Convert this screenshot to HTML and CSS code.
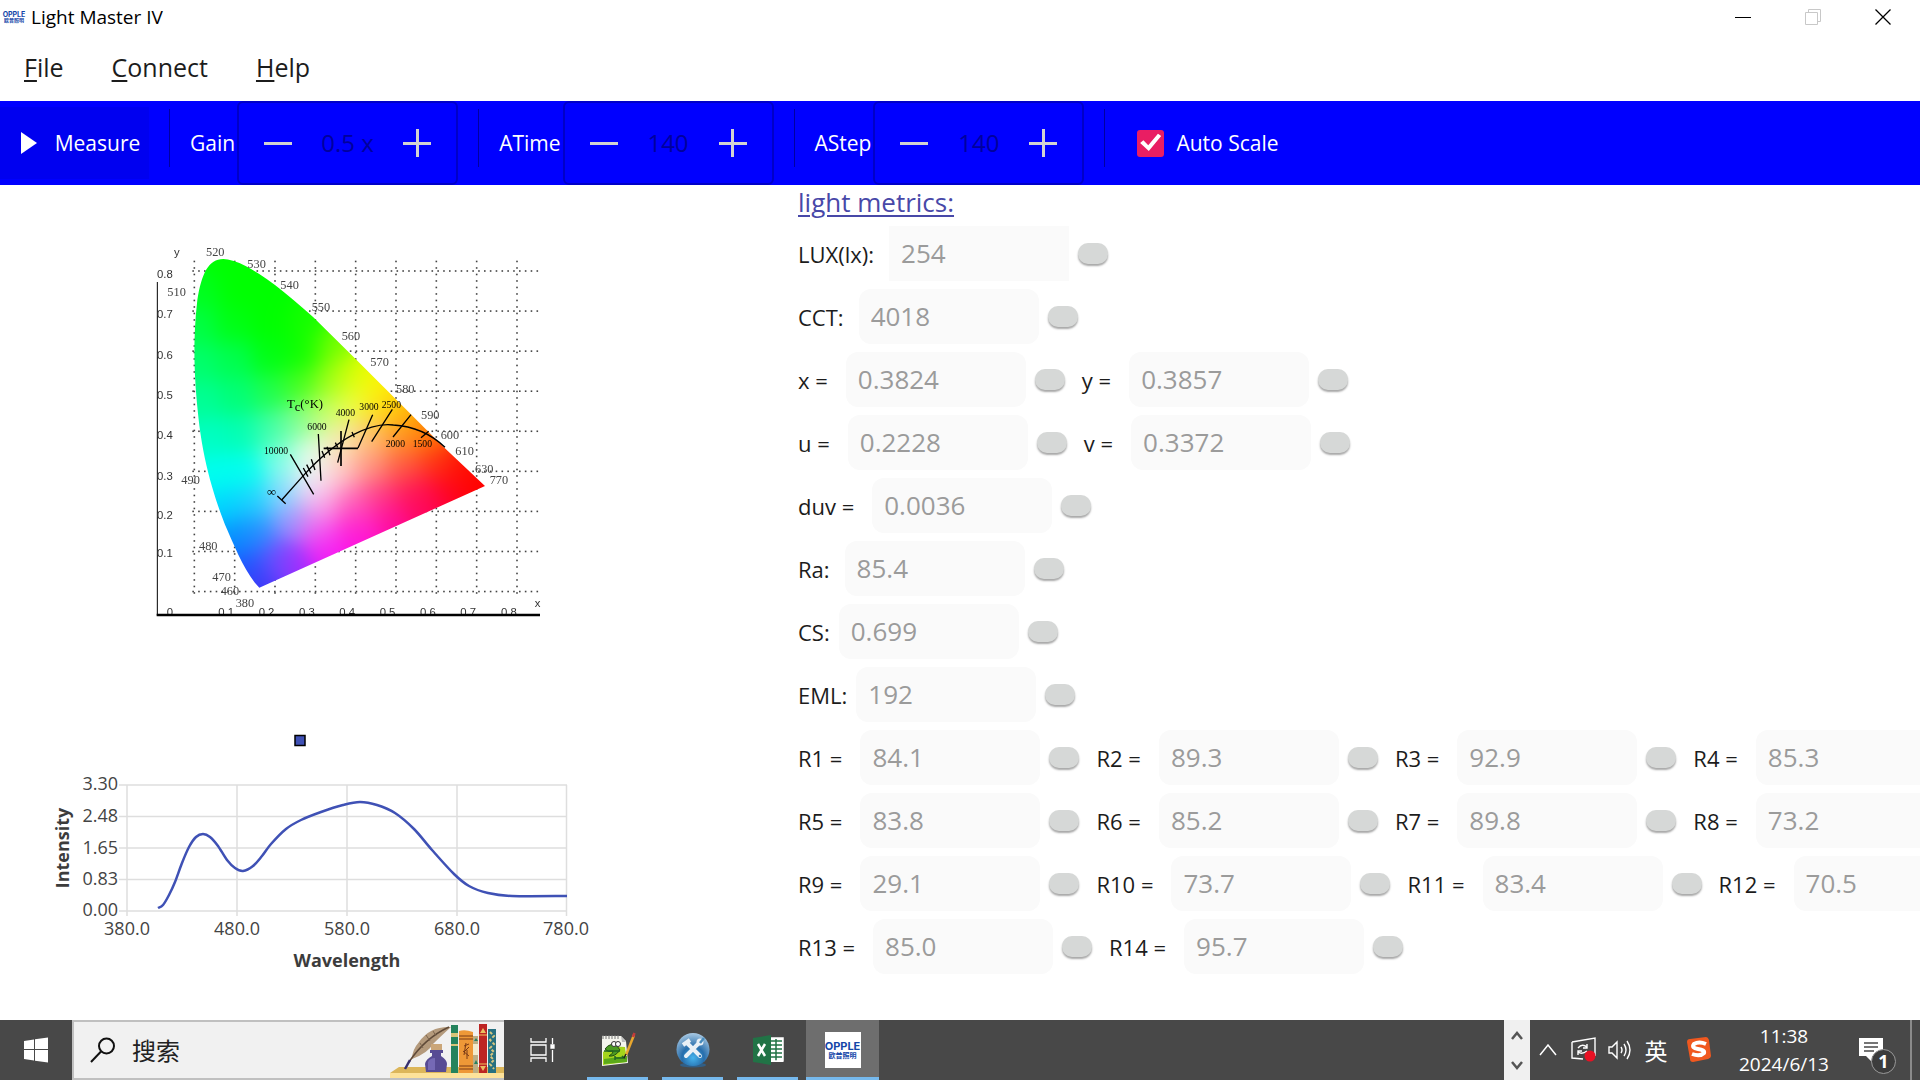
FILE: index.html
```html
<!DOCTYPE html>
<html lang="en">
<head>
  <meta charset="UTF-8">
  <meta name="viewport" content="width=device-width, initial-scale=1.0">
  <title>Light Master IV</title>
  <link rel="stylesheet" href="styles.css">
</head>
<body>

  <header class="titlebar">
    <span class="logo logo-small"><b>OPPLE</b><i>欧普照明</i></span>
    <span class="app-name">Light Master IV</span>
    <div class="window-buttons">
      <button aria-label="Minimize"><svg width="16" height="16"><path d="M0 8.5H16" stroke="#000"/></svg></button>
      <button aria-label="Restore" disabled><svg width="16" height="16" fill="none" stroke="#c8c8c8"><path d="M.5 3.500H12.500V15.500H.5zM3.500 3.500V.5H15.500V12.500H12.500"/></svg></button>
      <button aria-label="Close"><svg width="16" height="16"><path d="M.5 .5L15.500 15.500M15.500 .5L.5 15.500" stroke="#000" stroke-width="1.300"/></svg></button>
    </div>
  </header>

  <nav class="menu">
    <a href="#file"><u>F</u>ile</a>
    <a href="#connect"><u>C</u>onnect</a>
    <a href="#help"><u>H</u>elp</a>
  </nav>

  <div class="toolbar">
    <button class="measure"><svg width="16" height="22"><path d="M0 0L16 11L0 22z" fill="#fff"/></svg>Measure</button>
    <span class="sep"></span>
    <div class="setting">
      <label for="gain">Gain</label>
      <div class="spinner wide">
        <button class="minus" aria-label="Decrease gain"></button>
        <input id="gain" type="text" value="0.5 x">
        <button class="plus" aria-label="Increase gain"></button>
      </div>
    </div>
    <span class="sep"></span>
    <div class="setting">
      <label for="atime">ATime</label>
      <div class="spinner">
        <button class="minus" aria-label="Decrease ATime"></button>
        <input id="atime" type="text" value="140">
        <button class="plus" aria-label="Increase ATime"></button>
      </div>
    </div>
    <span class="sep"></span>
    <div class="setting">
      <label for="astep">AStep</label>
      <div class="spinner">
        <button class="minus" aria-label="Decrease AStep"></button>
        <input id="astep" type="text" value="140">
        <button class="plus" aria-label="Increase AStep"></button>
      </div>
    </div>
    <span class="sep"></span>
    <label class="auto-scale"><input type="checkbox" checked>Auto Scale</label>
  </div>

  <main>
    <section class="charts">
      <div class="cie">
        <canvas id="gamut" width="420" height="400"></canvas>
        <svg viewBox="0 0 1260 1200">
          <clipPath id="above-axis"><rect width="1260" height="1154"/></clipPath>
          <path d="M52 156V1156" stroke="#000" stroke-width="3"/>
          <g class="axis-text">
            <text x="51" y="144">0.8</text><text x="51" y="265">0.7</text><text x="51" y="388">0.6</text>
            <text x="51" y="508">0.5</text><text x="51" y="628">0.4</text><text x="51" y="749">0.3</text>
            <text x="51" y="868">0.2</text><text x="51" y="982">0.1</text>
            <text x="102" y="78">y</text><text x="1184" y="1131">x</text>
          </g>
          <g class="axis-text" clip-path="url(#above-axis)">
            <text x="80" y="1159">0</text><text x="235" y="1159">0.1</text><text x="356" y="1159">0.2</text>
            <text x="477" y="1159">0.3</text><text x="598" y="1159">0.4</text><text x="719" y="1159">0.5</text>
            <text x="840" y="1159">0.6</text><text x="961" y="1159">0.7</text><text x="1083" y="1159">0.8</text>
          </g>
          <path d="M50 1155H1200" stroke="#000" stroke-width="8"/>
          <g class="nm">
            <text x="198" y="78">520</text><text x="322" y="113">530</text><text x="421" y="176">540</text>
            <text x="515" y="244">550</text><text x="605" y="330">560</text><text x="691" y="408">570</text>
            <text x="768" y="490">580</text><text x="843" y="566">590</text><text x="902" y="627">600</text>
            <text x="946" y="675">610</text><text x="1005" y="728">630</text><text x="1049" y="763">770</text>
            <text x="82" y="197">510</text><text x="124" y="762">490</text><text x="177" y="960">480</text>
            <text x="217" y="1052">470</text><text x="242" y="1095">460</text><text x="287" y="1130">380</text>
          </g>
          <g class="kelvin">
            <text class="tc" x="441" y="534">T<tspan dy="8">c</tspan><tspan dy="-8">(°K)</tspan></text>
            <text x="372" y="673">10000</text><text x="502" y="600">6000</text><text x="587" y="558">4000</text>
            <text x="658" y="541">3000</text><text x="725" y="533">2500</text><text x="737" y="650">2000</text>
            <text x="818" y="650">1500</text><text class="tc" x="381" y="797">∞</text>
          </g>
          <g fill="none" stroke="#000" stroke-width="4">
            <path d="M425 810L490 737Q570 650 640 614T760 585Q850 590 915 652"/>
            <path d="M412 798L437 821M451 673L521 793M535 612L543 752M627 569L593 698M698 554L654 654M757 538L695 635M813 554L759 621M866 604L843 623"/>
            <path d="M490 714L504 740M500 704L513 730M514 688L525 720M546 663L554 683M561 650L570 676M586 638L593 652M636 606L643 622"/>
            <path d="M603 603V708M551 655H654" stroke-width="5"/>
          </g>
        </svg>
      </div>

      <svg class="spectrum" viewBox="0 0 580 270">
        <rect x="255" y="15.500" width="10" height="10" fill="#3f51b5" stroke="#000" stroke-width="1.500"/>
        <g stroke="#dedede" stroke-width="1.500">
          <path d="M79 65H527M79 96.500H527M79 128H527M79 159.500H527M79 191H527"/>
          <path d="M87 65V196M197 65V196M307 65V196M417 65V196M526.500 65V196"/>
        </g>
        <path id="spectrum-line" fill="none" stroke="#3f51b5" stroke-width="2.500"/>
        <g class="tick y">
          <text x="78" y="70">3.30</text><text x="78" y="102">2.48</text><text x="78" y="134">1.65</text>
          <text x="78" y="165">0.83</text><text x="78" y="196">0.00</text>
        </g>
        <g class="tick x">
          <text x="87" y="215">380.0</text><text x="197" y="215">480.0</text><text x="307" y="215">580.0</text>
          <text x="417" y="215">680.0</text><text x="526" y="215">780.0</text>
        </g>
        <text class="axis-title" x="307" y="247">Wavelength</text>
        <text class="axis-title" x="-128" y="29" transform="rotate(-90)">Intensity</text>
      </svg>
    </section>

    <section class="metrics">
      <h2><a href="#metrics">light metrics:</a></h2>
      <div class="row">
        <label for="lux">LUX(lx):</label><input class="square" id="lux" value="254" disabled><button aria-label="LUX"></button>
      </div>
      <div class="row">
        <label for="cct">CCT:</label><input id="cct" value="4018" disabled><button aria-label="CCT"></button>
      </div>
      <div class="row equal">
        <label for="x">x =</label><input id="x" value="0.3824" disabled><button aria-label="x"></button>
        <label for="y">y =</label><input id="y" value="0.3857" disabled><button aria-label="y"></button>
      </div>
      <div class="row equal">
        <label for="u">u =</label><input id="u" value="0.2228" disabled><button aria-label="u"></button>
        <label for="v">v =</label><input id="v" value="0.3372" disabled><button aria-label="v"></button>
      </div>
      <div class="row equal">
        <label for="duv">duv =</label><input id="duv" value="0.0036" disabled><button aria-label="duv"></button>
      </div>
      <div class="row">
        <label for="ra">Ra:</label><input id="ra" value="85.4" disabled><button aria-label="Ra"></button>
      </div>
      <div class="row tight">
        <label for="cs">CS:</label><input id="cs" value="0.699" disabled><button aria-label="CS"></button>
      </div>
      <div class="row tight">
        <label for="eml">EML:</label><input id="eml" value="192" disabled><button aria-label="EML"></button>
      </div>
      <div class="row equal">
        <label for="r1">R1 =</label><input id="r1" value="84.1" disabled><button aria-label="R1"></button>
        <label for="r2">R2 =</label><input id="r2" value="89.3" disabled><button aria-label="R2"></button>
        <label for="r3">R3 =</label><input id="r3" value="92.9" disabled><button aria-label="R3"></button>
        <label for="r4">R4 =</label><input id="r4" value="85.3" disabled><button aria-label="R4"></button>
      </div>
      <div class="row equal">
        <label for="r5">R5 =</label><input id="r5" value="83.8" disabled><button aria-label="R5"></button>
        <label for="r6">R6 =</label><input id="r6" value="85.2" disabled><button aria-label="R6"></button>
        <label for="r7">R7 =</label><input id="r7" value="89.8" disabled><button aria-label="R7"></button>
        <label for="r8">R8 =</label><input id="r8" value="73.2" disabled><button aria-label="R8"></button>
      </div>
      <div class="row equal">
        <label for="r9">R9 =</label><input id="r9" value="29.1" disabled><button aria-label="R9"></button>
        <label for="r10">R10 =</label><input id="r10" value="73.7" disabled><button aria-label="R10"></button>
        <label for="r11">R11 =</label><input id="r11" value="83.4" disabled><button aria-label="R11"></button>
        <label for="r12">R12 =</label><input id="r12" value="70.5" disabled><button aria-label="R12"></button>
      </div>
      <div class="row equal">
        <label for="r13">R13 =</label><input id="r13" value="85.0" disabled><button aria-label="R13"></button>
        <label for="r14">R14 =</label><input id="r14" value="95.7" disabled><button aria-label="R14"></button>
      </div>
    </section>
  </main>

  <footer class="taskbar">
    <button class="start" aria-label="Start">
      <svg width="24" height="26" fill="#fff"><path d="M0 4L10 2.500V12H0zM11 2.300L24 .5V12H11zM0 13H10V23.500L0 22zM11 13H24V25.500L11 23.700z"/></svg>
    </button>
    <div class="search">
      <svg width="26" height="26" fill="none" stroke="#111" stroke-width="2"><circle cx="16.500" cy="9" r="7.500"/><path d="M11 14.500L1 25"/></svg>
      <input type="text" aria-label="搜索" placeholder="搜索">
      <svg class="books" width="114" height="54" viewBox="0 0 114 54">
        <path d="M9 43H114V54H0V49z" fill="#dcb65a"/><path d="M0 49H114V54H0z" fill="#fde29a"/>
        <path d="M61 3Q40 2 29 18Q22 26 22 35Q38 29 43 20Q50 13 61 3z" fill="#b49a7c"/>
        <path d="M59 3Q35 14 19 38" fill="none" stroke="#5f4a38" stroke-width="1.500"/>
        <path d="M30 19L33 24M36 11L40 17M43 7L46 12" stroke="#7d664f"/>
        <path d="M20 36L15 45" stroke="#37306f" stroke-width="2.500"/>
        <path d="M41 20H52V27H41z" fill="#cba678"/><path d="M40 26H53V29H51V32Q57 36 57 40L56 48H36L35 40Q36 35 42 32V29H40z" fill="#574b94"/>
        <path d="M38 38Q40 34 45 34V46H38z" fill="#7569b5"/>
        <path d="M61 1H68V49H61z" fill="#24835d"/><path d="M61 9H68V13H61zM61 20H68V22H61z" fill="#d8c478"/>
        <path d="M69 7Q75 5 83 8V49H69z" fill="#ee9837"/><path d="M69 12H83M69 15H83M69 42H83M69 45H83" stroke="#7a3a16"/>
        <path d="M74 22L79 20M76 19L74 31M79 23L74 28M73 27L79 32M77 26V35" stroke="#7a3a16"/>
        <path d="M83 12H88V49H83z" fill="#bcae84"/><path d="M83 20H88V31H83z" fill="#f2eacb"/><path d="M84 17L86 14L88 17zM84 40L86 36L88 40z" fill="#297f5f"/>
        <path d="M89 0H97V49H89z" fill="#bd2423"/><path d="M90 9L93 4L96 9zM90 42H96L93 47z" fill="#e9bd60"/><path d="M89 11H97M89 40H97" stroke="#f0c15c"/>
        <path d="M98 5H106V49H98z" fill="#277080"/><path d="M100 8L104 12L100 16L104 20L100 24L104 28L100 32L104 36L100 40L104 45" fill="none" stroke="#d8c67f" stroke-width="2" stroke-dasharray="3 2"/>
      </svg>
    </div>
    <div class="apps">
      <button aria-label="Task view">
        <svg width="25" height="26" fill="none" stroke="#fff" stroke-width="1.300"><path d="M1 1V5H16V1M1 25V21H16V25M1 8H16V18H1zM22.500 1V7M22.500 13V25"/><path d="M21 8H24V11H21z" fill="#fff"/></svg>
      </button>
      <button class="running" aria-label="Notepad++">
        <svg width="36" height="36" viewBox="0 0 36 36">
          <path d="M2 4H21L26 9L28 31L2 34z" fill="#f5f5ee"/><path d="M21 4L22 10L26 10z" fill="#bbb"/>
          <path d="M3 3V7M6 3V7M9 3V7M12 3V7M15 3V7M18 3V7" stroke="#777"/>
          <path d="M3 20Q10 14 25 15L27 30L3 33z" fill="#a5d51c"/><path d="M4 27L27 24L27 30L4 32z" fill="#5ba91a"/>
          <path d="M5 17Q10 10 17 14L20 18Q15 25 9 24Q14 21 13 19Q8 21 5 17z" fill="#4a9a22" stroke="#234d12"/>
          <circle cx="14" cy="12" r="2.500" fill="#fff" stroke="#333"/><circle cx="18" cy="12" r="2.500" fill="#fff" stroke="#333"/>
          <path d="M4 19H20M15 28V24M15 26H24L22 24" fill="none" stroke="#262" stroke-width="1.500"/>
          <path d="M34 3L26 23" stroke="#e9a72e" stroke-width="2.500"/><path d="M34.500 1L33 5" stroke="#c23b3b" stroke-width="2.500"/><path d="M26 22L24 26" stroke="#222" stroke-width="1.500"/>
        </svg>
      </button>
      <button class="running" aria-label="Tools">
        <svg width="36" height="36" viewBox="0 0 36 36">
          <radialGradient id="orb" cx=".5" cy=".75" r=".75"><stop stop-color="#45b3ed"/><stop offset=".45" stop-color="#276eac"/><stop offset="1" stop-color="#a9c9e3"/></radialGradient>
          <ellipse cx="18" cy="33" rx="13" ry="2.500" fill="#315f87"/>
          <circle cx="18" cy="17.500" r="16.500" fill="url(#orb)"/>
          <path d="M12 11L25 24M24 11L11 24" stroke="#e9f0f6" stroke-width="4" stroke-linecap="round"/>
          <path d="M8 13L15 8" stroke="#e9f0f6" stroke-width="4"/><circle cx="25" cy="10" r="3.500" fill="#e9f0f6"/><path d="M25 11L29 6" stroke="#478bbd" stroke-width="2.500"/><circle cx="25" cy="24" r="1.300" fill="#3a7db6"/>
        </svg>
      </button>
      <button class="running" aria-label="Excel">
        <svg width="32" height="32" viewBox="0 0 32 32">
          <path d="M17 4H31V28H17z" fill="#fff"/><path d="M19 7H30M19 11H30M19 15H30M19 19H30M19 23H30M24 5V27" stroke="#217346" stroke-width="1.500"/><path d="M17 4H31V27H17" fill="none" stroke="#fff" stroke-width="1.500"/>
          <path d="M1 4L19 1V31L1 28z" fill="#217346"/><path d="M6 10L13 22M13 10L6 22" stroke="#fff" stroke-width="2.500"/>
        </svg>
      </button>
      <button class="running current" aria-label="Light Master IV"><span class="logo"><b>OPPLE</b><i>欧普照明</i></span></button>
    </div>
    <div class="tray">
      <div class="scroller">
        <button aria-label="Scroll up"><svg width="12" height="9"><path d="M1 8L6 2L11 8" fill="none" stroke="#555" stroke-width="2.500"/></svg></button>
        <button aria-label="Scroll down"><svg width="12" height="9"><path d="M1 1L6 7L11 1" fill="none" stroke="#555" stroke-width="2.500"/></svg></button>
      </div>
      <button aria-label="Hidden icons"><svg width="18" height="12"><path d="M1 11L9 1L17 11" fill="none" stroke="#fff" stroke-width="1.500"/></svg></button>
      <button aria-label="Update"><svg width="26" height="26" fill="none" stroke="#fff" stroke-width="1.400"><path d="M1 5L24 1V19M12 22L1 21V5"/><path d="M7 11Q11 6 16 10M16 7V11H12M16 14Q11 18 7 15M7 18V14H11"/><circle cx="19" cy="19" r="5.500" fill="#e81123" stroke="none"/></svg></button>
      <button aria-label="Volume"><svg width="24" height="20" fill="none" stroke="#fff" stroke-width="1.400"><path d="M1 7V13H4L9 18V2L4 7zM13 7Q15 10 13 13M16 4Q20 10 16 16M19 1Q25 10 19 19"/></svg></button>
      <button class="ime">英</button>
      <button class="sogou" aria-label="Sogou"><svg width="26" height="26"><path d="M1 5Q1 2 4 2L20 0Q22 0 23 3L25 19Q25 21 22 22L7 25Q4 25 4 22z" fill="#f0581f"/><path d="M20 7Q13 4 8 7Q5 11 12 12Q19 13 18 16Q14 20 6 17" fill="none" stroke="#fff" stroke-width="4"/></svg></button>
      <button class="clock"><span>11:38</span><span>2024/6/13</span></button>
      <button class="notice" aria-label="Notifications"><svg width="36" height="38"><path d="M0 7H24V25H13V31L7 25H0z" fill="#fff"/><path d="M5 12H19M5 16H19M5 20H15" stroke="#484848" stroke-width="1.500"/></svg><span class="badge">1</span></button>
      <span class="desktop-edge"></span>
    </div>
  </footer>

  <script src="script.js"></script>
</body>
</html>
```
FILE: styles.css
```css
* {
  box-sizing: border-box;
}
body {
  margin: 0;
  min-height: 100vh;
  display: flex;
  flex-direction: column;
  font-family: "Open Sans", "Noto Sans CJK SC", sans-serif;
  color: #1c1c1c;
  background: #fff;
  overflow-x: hidden;
}
button, input {
  font-family: inherit;
  font-size: inherit;
  color: inherit;
  border: none;
  background: none;
  padding: 0;
  margin: 0;
}
button {
  display: flex;
  align-items: center;
  justify-content: center;
}
a {
  color: inherit;
  text-decoration: none;
}
svg {
  display: block;
}

/* title bar */
.titlebar {
  display: flex;
  align-items: center;
  height: 34px;
  font-size: 19px;
  color: #000;
}
.logo {
  display: flex;
  flex-direction: column;
  align-items: center;
  justify-content: center;
  width: 36px;
  height: 36px;
  background: #fff;
  color: #1446a8;
  font-family: Inter, "Noto Sans CJK SC", sans-serif;
}
.logo b {
  font-size: 11px;
  line-height: 11px;
}
.logo i {
  font-size: 7px;
  line-height: 8px;
  font-style: normal;
  font-weight: bold;
}
.logo-small {
  width: 24px;
  height: 24px;
  margin: 0 5px 0 2px;
}
.logo-small b {
  font-size: 7px;
  line-height: 7px;
}
.logo-small i {
  font-size: 5px;
  line-height: 5px;
}
.window-buttons {
  display: flex;
  margin-left: auto;
  padding-right: 2px;
}
.window-buttons button {
  width: 70px;
  height: 34px;
}

/* menu */
.menu {
  display: flex;
  align-items: center;
  height: 67px;
  padding-bottom: 2px;
  font-size: 25px;
}
.menu a {
  padding: 0 24px;
}
.menu u {
  text-underline-offset: 3px;
  text-decoration-thickness: 2px;
}

/* toolbar */
.toolbar {
  display: flex;
  align-items: center;
  gap: 20px;
  height: 84px;
  background: #00f;
  color: #fff;
  font-size: 21px;
}
.measure {
  width: 149px;
  height: 72px;
  gap: 18px;
  padding-left: 12px;
  background: #0000f0;
}
.sep {
  align-self: flex-start;
  width: 1px;
  height: 58px;
  margin-top: 8px;
  background: #0000a0;
}
.setting {
  display: flex;
  align-items: center;
  gap: 2px;
}
.spinner {
  display: flex;
  width: 211px;
  height: 84px;
  border: 2px solid #0000c8;
  border-radius: 6px;
}
.spinner.wide {
  width: 221px;
}
.spinner button {
  width: 78px;
  flex: none;
}
.spinner input {
  flex: 1;
  min-width: 0;
  padding-bottom: 2px;
  text-align: center;
  font-size: 24px;
  color: #00009c;
}
.minus::before, .plus::before {
  content: "";
  width: 28px;
  height: 28px;
  background: linear-gradient(#d2d2d2, #d2d2d2) center / 28px 3px no-repeat;
}
.plus::before {
  background: linear-gradient(#d2d2d2, #d2d2d2) center / 28px 3px no-repeat, linear-gradient(#d2d2d2, #d2d2d2) center / 3px 28px no-repeat;
}
.auto-scale {
  display: flex;
  align-items: center;
  gap: 12px;
  margin-left: 12px;
}
.auto-scale input {
  appearance: none;
  width: 27px;
  height: 27px;
  border-radius: 3px;
  background: #e91e63;
}
.auto-scale input:checked::before {
  content: "";
  display: block;
  width: 27px;
  height: 27px;
  background: #fff;
  clip-path: polygon(10% 50%, 22% 40%, 40% 58%, 76% 16%, 88% 24%, 42% 80%);
}

/* charts on the left, readings on the right */
main {
  flex: 1;
  display: grid;
  grid-template-columns: 133fr 187fr;
}
.charts {
  padding: 45px 0 0 40px;
}
.cie {
  position: relative;
  width: 420px;
  margin: 0 0 90px 100px;
}
.cie canvas {
  display: block;
}
.cie svg {
  position: absolute;
  inset: 0;
}
.axis-text {
  font: 34px "Liberation Sans", sans-serif;
  fill: #333;
}
.nm {
  font: 37px "Liberation Serif", serif;
  fill: #444;
}
.kelvin {
  font: 29px "Liberation Serif", serif;
}
.kelvin .tc {
  font-size: 38px;
}
.spectrum {
  width: 580px;
  height: 270px;
}
.tick {
  font-size: 18px;
  fill: #444;
}
.tick.y {
  text-anchor: end;
}
.tick.x, .axis-title {
  text-anchor: middle;
}
.axis-title {
  font-size: 18px;
  font-weight: bold;
  fill: #3c3c3c;
}

/* readings */
.metrics {
  min-width: 0;
  overflow: hidden;
}
.metrics h2 {
  margin: 0 0 7px;
  font-size: 26px;
  line-height: 34px;
  font-weight: normal;
  color: #4848a8;
}
.metrics h2 a {
  text-decoration: underline;
  text-decoration-thickness: 2px;
  text-underline-offset: 3px;
}
.row {
  display: flex;
  align-items: center;
  height: 55px;
  margin-bottom: 8px;
  font-size: 22px;
}
.row label {
  flex: none;
  margin-right: 15px;
}
.row.equal label {
  margin-right: 18px;
}
.row.tight label {
  margin-right: 9px;
}
.row input {
  flex: none;
  width: 180px;
  height: 55px;
  padding: 0 12px 2px;
  border-radius: 12px;
  background: #fafafa;
  color: #9b9b9b;
  font-size: 26px;
}
.row input.square {
  border-radius: 0;
}
.row button {
  flex: none;
  width: 30px;
  height: 21px;
  margin: 0 17px 0 9px;
  border-radius: 10px;
  background: #d6d8d7;
  box-shadow: 0 2px 2px #a8a8a8;
}

/* taskbar */
.taskbar {
  display: flex;
  height: 60px;
  background: #484848;
  color: #fff;
}
.start {
  width: 72px;
}
.search {
  display: flex;
  align-items: center;
  width: 432px;
  padding-left: 16px;
  border: 2px solid #c0c0c0;
  border-right-width: 0;
  background: #f1f1f1;
}
.search input {
  flex: 1;
  min-width: 0;
  margin-left: 16px;
  font-size: 24px;
}
.search input::placeholder {
  color: #222;
}
.books {
  flex: none;
  align-self: flex-end;
}
.apps {
  display: flex;
  gap: 2px;
  padding-left: 2px;
}
.apps button {
  width: 73px;
  height: 60px;
}
.running {
  background: linear-gradient(#76b9ed, #76b9ed) bottom / 61px 3px no-repeat;
}
.running.current {
  background: linear-gradient(#76b9ed, #76b9ed) bottom / 73px 3px no-repeat #6e6e6e;
}
.tray {
  display: flex;
  align-items: center;
  margin-left: auto;
}
.tray button {
  width: 36px;
  height: 60px;
}
.tray .scroller {
  width: 26px;
  background: #f0f0f0;
}
.tray .scroller button {
  width: 26px;
  height: 30px;
}
.tray .ime {
  font-size: 23px;
}
.tray .sogou {
  width: 50px;
}
.tray .clock {
  flex-direction: column;
  width: 120px;
  font-size: 19px;
  line-height: 28px;
}
.tray .notice {
  position: relative;
  width: 66px;
}
.badge {
  position: absolute;
  right: 14px;
  bottom: 6px;
  width: 25px;
  height: 25px;
  border: 1px solid #999;
  border-radius: 50%;
  background: #3c3c3c;
  font-size: 18px;
  font-weight: bold;
  line-height: 23px;
}
.desktop-edge {
  align-self: stretch;
  width: 10px;
  border-left: 2px solid #8a8a8a;
}
```
FILE: script.js
```js
// diagram units: 3 per pixel, 1210 per 1.0 of x or y, origin at (163, 1085)
const canvas = document.getElementById('gamut');
const ctx = canvas.getContext('2d');
const w = canvas.width;
const h = canvas.height;

// dotted grid
ctx.fillStyle = '#444';
for (let i = 0; i < 9; i++) {
  const gx = (163 + i * 121) / 3;
  const gy = (123 + i * 120.2) / 3;
  for (let y = 92; y < 1090; y += 19.5) ctx.fillRect(gx - 0.8, y / 3, 1.6, 1.6);
  for (let x = 157; x < 1195; x += 17.5) ctx.fillRect(x / 3, gy - 0.8, 1.6, 1.6);
}

// colour samples [x, y, r, g, b], blended with a gaussian weight
const samples = [
  [250, 90, 0, 255, 0], [180, 180, 0, 255, 30], [300, 180, 0, 255, 0], [400, 180, 0, 255, 0],
  [170, 290, 0, 255, 70], [280, 280, 0, 255, 20], [390, 280, 0, 255, 0], [500, 270, 20, 255, 0],
  [170, 400, 0, 255, 110], [280, 390, 0, 255, 80], [390, 380, 0, 255, 20], [490, 370, 10, 255, 0], [580, 350, 120, 255, 0],
  [180, 510, 0, 255, 150], [290, 500, 0, 255, 120], [390, 490, 30, 255, 80], [480, 470, 70, 255, 30], [570, 450, 160, 255, 20],
  [650, 430, 225, 255, 0], [720, 460, 255, 245, 0], [200, 620, 0, 255, 195], [300, 610, 0, 255, 180],
  [390, 600, 60, 255, 170], [470, 580, 130, 255, 150], [550, 550, 200, 255, 110], [640, 520, 240, 255, 70],
  [730, 530, 255, 220, 20], [800, 540, 255, 180, 0], [870, 610, 255, 120, 0], [780, 620, 255, 145, 40],
  [690, 620, 255, 195, 120], [600, 630, 250, 235, 180], [510, 670, 235, 255, 235], [420, 690, 130, 255, 230],
  [320, 720, 0, 255, 240], [220, 730, 0, 255, 240], [250, 830, 0, 215, 255], [340, 820, 30, 210, 255],
  [430, 790, 140, 220, 255], [520, 750, 245, 240, 250], [600, 720, 255, 205, 200], [690, 710, 255, 145, 125],
  [790, 710, 255, 90, 65], [890, 700, 255, 50, 20], [970, 710, 255, 15, 0], [1030, 765, 255, 0, 0],
  [920, 790, 255, 0, 30], [820, 790, 255, 25, 85], [720, 800, 255, 60, 130], [630, 810, 255, 115, 185],
  [540, 820, 250, 170, 235], [450, 880, 155, 145, 255], [350, 910, 40, 140, 255], [280, 920, 0, 140, 255],
  [320, 1010, 25, 85, 255], [360, 1070, 65, 50, 245], [410, 990, 100, 85, 255], [460, 1000, 170, 35, 255],
  [540, 900, 245, 100, 240], [560, 960, 245, 20, 245], [650, 920, 255, 10, 225], [650, 870, 255, 50, 195],
  [750, 870, 255, 5, 160], [850, 830, 255, 0, 100]
];
const layer = document.createElement('canvas');
layer.width = w;
layer.height = h;
const layerCtx = layer.getContext('2d');
const img = layerCtx.createImageData(w, h);
for (let py = 0; py < h; py++) {
  for (let px = 0; px < w; px++) {
    let sum = 1e-9;
    const rgb = [0, 0, 0];
    for (const s of samples) {
      const dist = (s[0] - px * 3) ** 2 + (s[1] - py * 3) ** 2;
      const weight = Math.exp(-dist / 4600);
      sum += weight;
      for (let c = 0; c < 3; c++) rgb[c] += weight * s[2 + c];
    }
    const k = (py * w + px) * 4;
    for (let c = 0; c < 3; c++) img.data[k + c] = rgb[c] / sum;
    img.data[k + 3] = 255;
  }
}
layerCtx.putImageData(img, 0, 0);

const outline = new Path2D('M250 87C205 88 185 130 172 210C158 330 162 440 175 560C190 700 225 810 262 900C290 965 320 1035 358 1073L1035 768L910 650L800 540L640 380L520 262Q460 208 405 165Q300 87 250 87z');
ctx.scale(1 / 3, 1 / 3);
ctx.clip(outline);
ctx.drawImage(layer, 0, 0, w * 3, h * 3);

// smooth curve through the measured spectrum
const pts = [
  [118, 188], [123, 185], [129, 175], [135, 162], [142, 143], [149, 127], [156, 117], [163, 114],
  [170, 117], [178, 126], [187, 140], [195, 148], [203, 151], [213, 146], [222, 136], [231, 124],
  [246, 109], [261, 100], [281, 92], [303, 85], [320, 82], [337, 85], [355, 93], [374, 109],
  [392, 130], [414, 154], [429, 166], [448, 173], [472, 176], [527, 176]
];
let d = `M${pts[0]}`;
for (let i = 0; i < pts.length - 1; i++) {
  const a = pts[Math.max(i - 1, 0)];
  const b = pts[i];
  const c = pts[i + 1];
  const e = pts[Math.min(i + 2, pts.length - 1)];
  d += `C${b[0] + (c[0] - a[0]) / 6} ${b[1] + (c[1] - a[1]) / 6} ${c[0] - (e[0] - b[0]) / 6} ${c[1] - (e[1] - b[1]) / 6} ${c}`;
}
document.getElementById('spectrum-line').setAttribute('d', d);
```
